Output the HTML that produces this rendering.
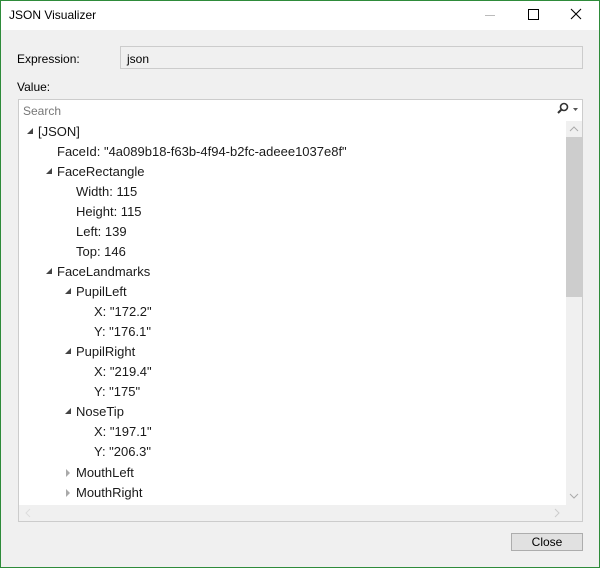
<!DOCTYPE html>
<html><head><style>
*{margin:0;padding:0;box-sizing:border-box}
body{width:600px;height:568px;background:#f0f0f0;font-family:"Liberation Sans",sans-serif;font-size:12px;color:#000;position:relative;overflow:hidden}
.win{position:absolute;left:0;top:0;width:600px;height:568px;border:1px solid #2e8b3a;z-index:5;pointer-events:none}
.title{position:absolute;left:1px;top:1px;width:598px;height:29px;background:#fff}
.abs{position:absolute}
.row{position:absolute;font-size:13px;color:#1a1a1a;white-space:nowrap}
.tri{position:absolute;width:0;height:0;border-left:6px solid transparent;border-bottom:6px solid #444}
.tric{position:absolute;width:0;height:0;border-top:4px solid transparent;border-bottom:4px solid transparent;border-left:4px solid #aaa}
</style></head><body>
<div class="win"></div>
<div class="title"></div>
<div class="abs" style="left:9px;top:8px;font-size:12px">JSON Visualizer</div>
<div class="abs" style="left:485px;top:15px;width:10px;height:1px;background:#bbb"></div>
<div class="abs" style="left:528px;top:9px;width:11px;height:11px;border:1px solid #000"></div>
<svg class="abs" style="left:570px;top:8px" width="12" height="12"><path d="M1 1L11 11M11 1L1 11" stroke="#000" stroke-width="1.1"/></svg>
<div class="abs" style="left:17px;top:52px">Expression:</div>
<div class="abs" style="left:120px;top:46px;width:463px;height:23px;border:1px solid #ccc;background:#f0f0f0;padding:5px 0 0 6px">json</div>
<div class="abs" style="left:17px;top:80px">Value:</div>
<div class="abs" style="left:18px;top:99px;width:565px;height:22px;border:1px solid #ccc;background:#fff;color:#777;padding:4px 0 0 4px">Search</div>
<svg class="abs" style="left:555px;top:102px" width="26" height="14"><circle cx="9" cy="5" r="3.5" stroke="#333" stroke-width="1.6" fill="none"/><path d="M6.5 7.5L3 11" stroke="#333" stroke-width="2"/><path d="M18 6h5l-2.5 3z" fill="#555"/></svg>
<div class="abs" style="left:18px;top:120px;width:565px;height:402px;border:1px solid #ccc;border-top:none;background:#fff"></div>
<div class="abs" style="left:566px;top:121px;width:16px;height:384px;background:#f0f0f0"></div>
<div class="abs" style="left:566px;top:137px;width:16px;height:160px;background:#cdcdcd"></div>
<svg class="abs" style="left:569px;top:125px" width="10" height="8"><path d="M1 6L5 2L9 6" stroke="#aaa" fill="none"/></svg>
<svg class="abs" style="left:569px;top:492px" width="10" height="8"><path d="M1 2L5 6L9 2" stroke="#aaa" fill="none"/></svg>
<div class="abs" style="left:19px;top:505px;width:563px;height:16px;background:#f0f0f0"></div>
<svg class="abs" style="left:553px;top:508px" width="8" height="10"><path d="M2 1L6 5L2 9" stroke="#ccc" fill="none"/></svg>
<svg class="abs" style="left:24px;top:508px" width="8" height="10"><path d="M6 1L2 5L6 9" stroke="#ddd" fill="none"/></svg>

<div class="tri" style="left:27px;top:128px"></div><div class="row" style="left:38px;top:124px">[JSON]</div>
<div class="row" style="left:57px;top:144px">FaceId: "4a089b18-f63b-4f94-b2fc-adeee1037e8f"</div>
<div class="tri" style="left:46px;top:168px"></div><div class="row" style="left:57px;top:164px">FaceRectangle</div>
<div class="row" style="left:76px;top:184px">Width: 115</div>
<div class="row" style="left:76px;top:204px">Height: 115</div>
<div class="row" style="left:76px;top:224px">Left: 139</div>
<div class="row" style="left:76px;top:244px">Top: 146</div>
<div class="tri" style="left:46px;top:268px"></div><div class="row" style="left:57px;top:264px">FaceLandmarks</div>
<div class="tri" style="left:65px;top:288px"></div><div class="row" style="left:76px;top:284px">PupilLeft</div>
<div class="row" style="left:94px;top:304px">X: "172.2"</div>
<div class="row" style="left:94px;top:324px">Y: "176.1"</div>
<div class="tri" style="left:65px;top:348px"></div><div class="row" style="left:76px;top:344px">PupilRight</div>
<div class="row" style="left:94px;top:364px">X: "219.4"</div>
<div class="row" style="left:94px;top:384px">Y: "175"</div>
<div class="tri" style="left:65px;top:408px"></div><div class="row" style="left:76px;top:404px">NoseTip</div>
<div class="row" style="left:94px;top:424px">X: "197.1"</div>
<div class="row" style="left:94px;top:444px">Y: "206.3"</div>
<div class="tric" style="left:66px;top:469px"></div><div class="row" style="left:76px;top:465px">MouthLeft</div>
<div class="tric" style="left:66px;top:489px"></div><div class="row" style="left:76px;top:485px">MouthRight</div>

<div class="abs" style="left:511px;top:533px;width:72px;height:18px;border:1px solid #adadad;background:#e1e1e1;text-align:center;line-height:16px">Close</div>
</body></html>
